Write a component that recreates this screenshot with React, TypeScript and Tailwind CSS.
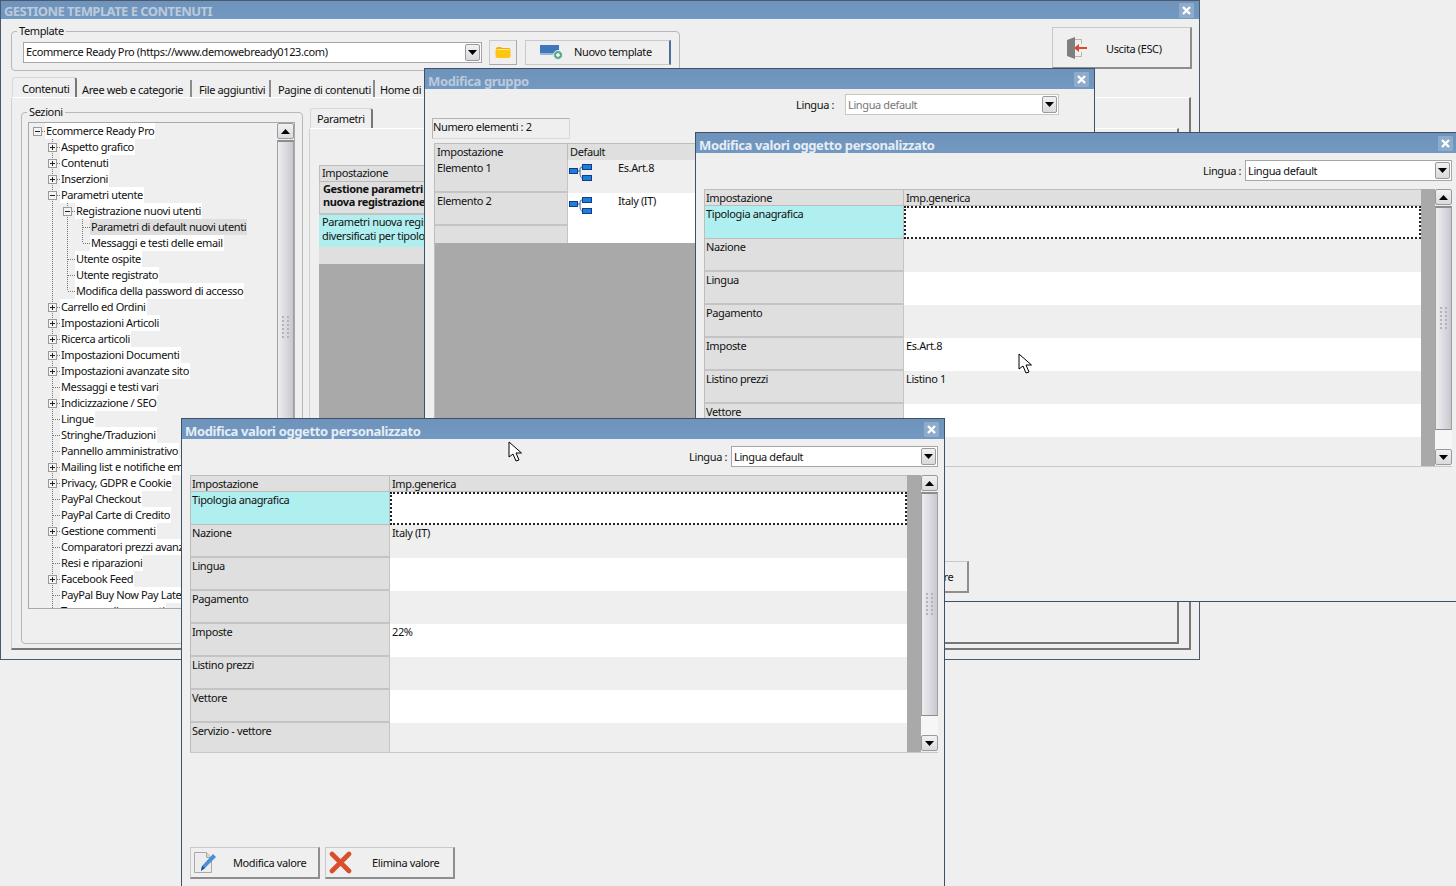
import React from 'react'

type TreeRow = { text: string; level: number; exp?: '+' | '-'; last?: boolean; selected?: boolean }

const treeRows: TreeRow[] = [
  { text: 'Ecommerce Ready Pro', level: 0, exp: '-' },
  { text: 'Aspetto grafico', level: 1, exp: '+' },
  { text: 'Contenuti', level: 1, exp: '+' },
  { text: 'Inserzioni', level: 1, exp: '+' },
  { text: 'Parametri utente', level: 1, exp: '-' },
  { text: 'Registrazione nuovi utenti', level: 2, exp: '-' },
  { text: 'Parametri di default nuovi utenti', level: 3, selected: true },
  { text: 'Messaggi e testi delle email', level: 3, last: true },
  { text: 'Utente ospite', level: 2 },
  { text: 'Utente registrato', level: 2 },
  { text: 'Modifica della password di accesso', level: 2, last: true },
  { text: 'Carrello ed Ordini', level: 1, exp: '+' },
  { text: 'Impostazioni Articoli', level: 1, exp: '+' },
  { text: 'Ricerca articoli', level: 1, exp: '+' },
  { text: 'Impostazioni Documenti', level: 1, exp: '+' },
  { text: 'Impostazioni avanzate sito', level: 1, exp: '+' },
  { text: 'Messaggi e testi vari', level: 1 },
  { text: 'Indicizzazione / SEO', level: 1, exp: '+' },
  { text: 'Lingue', level: 1 },
  { text: 'Stringhe/Traduzioni', level: 1 },
  { text: 'Pannello amministrativo', level: 1 },
  { text: 'Mailing list e notifiche email', level: 1, exp: '+' },
  { text: 'Privacy, GDPR e Cookie', level: 1, exp: '+' },
  { text: 'PayPal Checkout', level: 1 },
  { text: 'PayPal Carte di Credito', level: 1 },
  { text: 'Gestione commenti', level: 1, exp: '+' },
  { text: 'Comparatori prezzi avanzati', level: 1 },
  { text: 'Resi e riparazioni', level: 1 },
  { text: 'Facebook Feed', level: 1, exp: '+' },
  { text: 'PayPal Buy Now Pay Later', level: 1 },
  { text: 'Tracce e collegamenti', level: 1 },
]

const tabs = [
  { label: 'Aree web e categorie', box: 'w-[115px] pl-[5px]' },
  { label: 'File aggiuntivi', box: 'w-[79px] pl-[7px]' },
  { label: 'Pagine di contenuti', box: 'w-[104px] pl-[7px]' },
]

// righe condivise dalle due finestre "valori oggetto"
const rowLabels = ['Nazione', 'Lingua', 'Pagamento', 'Imposte', 'Listino prezzi', 'Vettore', 'Servizio - vettore']

function TreeCell({ vertical, half, exp, dash }: { vertical?: boolean; half?: boolean; exp?: '+' | '-'; dash?: boolean }) {
  return (
    <svg width="15" height="16" className="shrink-0" shapeRendering="crispEdges">
      {vertical && <line x1="7.5" y1="0" x2="7.5" y2={half ? 8 : 16} stroke="#777" strokeDasharray="1 1" />}
      {dash && <line x1="8" y1="8.5" x2="15" y2="8.5" stroke="#777" strokeDasharray="1 1" />}
      {exp && (
        <>
          <rect x="3.5" y="4.5" width="8" height="8" fill="#f4f4f4" stroke="#999" />
          <line x1="5" y1="8.5" x2="10" y2="8.5" stroke="#222" />
          {exp === '+' && <line x1="7.5" y1="6" x2="7.5" y2="11" stroke="#222" />}
        </>
      )}
    </svg>
  )
}

function Tree() {
  return (
    <div className="min-w-0 flex-1 overflow-hidden pl-px">
      {treeRows.map((r, i) => (
        <div key={i} className="flex h-4 items-center whitespace-nowrap">
          {r.level >= 1 && <TreeCell />}
          {r.level >= 2 && <TreeCell vertical />}
          {r.level >= 3 && <TreeCell vertical />}
          <TreeCell vertical={r.level > 0} half={r.last} exp={r.exp} dash />
          <span className={`px-px leading-4 ${r.selected ? 'bg-[#dedede]' : 'bg-white'}`}>{r.text}</span>
        </div>
      ))}
    </div>
  )
}

function Arrow({ up }: { up?: boolean }) {
  return (
    <svg width="9" height="5" viewBox="0 0 9 5">
      <path d={up ? 'M4.5 0 9 5H0z' : 'M0 0h9L4.5 5z'} fill="#000" />
    </svg>
  )
}

function ArrowButton({ up, className }: { up?: boolean; className?: string }) {
  return (
    <div className={`flex shrink-0 items-center justify-center rounded-[2px] border border-[#9a9a9a] bg-gradient-to-b from-[#f2f2f4] to-[#d9d9de] ${className ?? ''}`}>
      <Arrow up={up} />
    </div>
  )
}

function Grip() {
  return (
    <svg width="7" height="23" viewBox="0 0 7 23">
      {[0, 4, 8, 12, 16, 20].map(y => (
        <g key={y} fill="#b4b4b8">
          <rect x="0" y={y} width="2" height="2" />
          <rect x="5" y={y} width="2" height="2" />
        </g>
      ))}
    </svg>
  )
}

function Scrollbar({ thumb, track, clipped }: { thumb: number; track: number; clipped?: boolean }) {
  return (
    <div className="flex h-full w-[17px] shrink-0 flex-col overflow-hidden">
      <ArrowButton up className="h-[16px] w-[17px]" />
      <div
        className="mt-px flex shrink-0 items-center justify-center border-x border-b border-t-2 border-x-[#a0a0a0] border-b-[#8c8c8c] border-t-[#8c8c8c] bg-gradient-to-r from-[#eeeef1] to-[#c8c8d0]"
        style={{ height: thumb }}
      >
        <Grip />
      </div>
      {!clipped && (
        <>
          <div className="shrink-0 bg-[#f6f6f6]" style={{ height: track }} />
          <ArrowButton className="h-[16px] w-[17px]" />
        </>
      )}
    </div>
  )
}

function CloseBox() {
  return (
    <div className="flex h-[15px] w-[15px] items-center justify-center rounded-[1px] bg-[#8eabcb]">
      <svg width="9" height="9" viewBox="0 0 9 9">
        <path d="M1 1l7 7M8 1L1 8" stroke="#fff" strokeWidth="2.4" />
      </svg>
    </div>
  )
}

function TitleBar({ title, dim, main }: { title: string; dim?: boolean; main?: boolean }) {
  return (
    <div className={`flex shrink-0 items-center justify-between bg-gradient-to-b from-[#6f93bb] to-[#7299c2] pl-[3px] pr-[5px] ${main ? 'h-[18px]' : 'h-[20px]'}`}>
      <span
        className={`text-[13px] font-bold leading-[16px] ${dim ? 'text-[#bccadb]' : 'text-[#e6edf5]'} ${main ? 'pt-[2px] tracking-[-0.55px]' : 'pt-[4px] tracking-[-0.37px]'}`}
      >
        {title}
      </span>
      <CloseBox />
    </div>
  )
}

function Combo({ value, width, disabled }: { value: string; width: string; disabled?: boolean }) {
  return (
    <div className={`flex h-[21px] items-center justify-between border bg-white pl-[2px] pr-px ${width} ${disabled ? 'border-[#c9c9bd] text-[#777]' : 'border-[#a6a6a6]'}`}>
      <span className="whitespace-nowrap">{value}</span>
      <ArrowButton className="h-[17px] w-[15px]" />
    </div>
  )
}

function OrgIcon() {
  return (
    <svg width="23" height="22" viewBox="0 0 23 22" className="shrink-0">
      <path d="M9 11h2M11 11c0-3 0-4 2.500-4M11 11c0 3 0 7 2.500 7" fill="none" stroke="#3b5f96" strokeWidth="1" />
      <rect x="0.500" y="8.500" width="8" height="5" fill="#1d7fd8" stroke="#123c8a" />
      <rect x="13.500" y="4.500" width="9" height="5" fill="#1d7fd8" stroke="#123c8a" />
      <rect x="13.500" y="15.500" width="9" height="5" fill="#1d7fd8" stroke="#123c8a" />
    </svg>
  )
}

function EditIcon() {
  return (
    <svg width="24" height="24" viewBox="0 0 24 24">
      <path d="M.5 1.500h12l5 5v15H.5z" fill="#ededed" stroke="#a8a8a8" />
      <path d="M12.500 1.500v5h5" fill="#d6d6d6" stroke="#a8a8a8" />
      <path d="M7 20l1-5L19 3l3 3-11 11z" fill="#4a90d9" />
      <path d="M7 20l1-5 3 2z" fill="#26527e" />
    </svg>
  )
}

function DeleteIcon() {
  return (
    <svg width="24" height="24" viewBox="0 0 24 24">
      <path d="M3 3l17 17M20 3 3 20" stroke="#d94f2b" strokeWidth="4.600" strokeLinecap="round" />
    </svg>
  )
}

function ActionButton({ icon, label, iconBox }: { icon: React.ReactNode; label: string; iconBox: string }) {
  return (
    <div className="flex h-[32px] w-[130px] items-center border border-b-2 border-r-2 border-[#c9c9c9] border-b-[#8e8e8e] border-r-[#8e8e8e] pl-[3px]">
      <div className={`flex justify-start ${iconBox}`}>{icon}</div>
      <span className="whitespace-nowrap">{label}</span>
    </div>
  )
}

// griglia + barra di scorrimento delle finestre "Modifica valori oggetto personalizzato"
function ValuesWindow({ className, values, thumb }: { className: string; values: Record<string, string>; thumb: number }) {
  return (
    <div className={`absolute flex flex-col border border-[#3f5169] bg-[#efefef] ${className}`}>
      <TitleBar title="Modifica valori oggetto personalizzato" />
      <div className="flex flex-col pl-[8px] pr-[6px]">
        <div className="mt-[7px] flex items-center justify-end gap-[4px]">
          <span>Lingua :</span>
          <Combo value="Lingua default" width="w-[207px]" />
        </div>
        <div className="mt-[8px] flex h-[278px] overflow-hidden border-b border-[#c8c8c8]">
          <div className="w-[717px] shrink-0 border-l border-t border-[#bdbdbd]">
            <div className="flex h-[16px] border-b border-[#bdbdbd] bg-[#dfdfdf] leading-[15px]">
              <div className="w-[199px] shrink-0 border-r border-[#bdbdbd] pl-px">Impostazione</div>
              <div className="pl-[2px]">Imp.generica</div>
            </div>
            <div className="flex h-[33px]">
              <div className="w-[199px] shrink-0 border-b border-r border-[#bdbdbd] bg-[#b0efef] pl-px leading-[16px]">Tipologia anagrafica</div>
              <div className="flex-1 border-2 border-dotted border-[#222] bg-white" />
            </div>
            {rowLabels.map((label, i) => (
              <div key={label} className={`flex h-[33px] ${i % 2 === 0 ? 'bg-[#efefef]' : 'bg-white'}`}>
                <div className="w-[199px] shrink-0 border-b-2 border-r border-[#c4c4c4] bg-[#dfdfdf] pl-px leading-[16px]">{label}</div>
                <div className="pl-[2px] leading-[16px]">{values[label]}</div>
              </div>
            ))}
          </div>
          <div className="w-[14px] shrink-0 bg-[#a9a9a9]" />
          <Scrollbar thumb={thumb} track={19} />
        </div>
        <div className="mt-[94px] flex gap-[5px]">
          <ActionButton icon={<EditIcon />} label="Modifica valore" iconBox="w-[39px]" />
          <ActionButton icon={<DeleteIcon />} label="Elimina valore" iconBox="w-[43px]" />
        </div>
      </div>
    </div>
  )
}

function GroupWindow() {
  return (
    <div className="absolute left-[424px] top-[68px] flex h-[520px] w-[671px] flex-col border border-[#3f5169] bg-[#efefef]">
      <TitleBar title="Modifica gruppo" dim />
      <div className="mt-[5px] flex items-center justify-end gap-[11px] pr-[35px]">
        <span>Lingua :</span>
        <Combo value="Lingua default" width="w-[214px]" disabled />
      </div>
      <div className="ml-[7px] mt-[3px] h-[21px] w-[138px] border border-[#b4b4b4] border-b-[#d8d8d8] border-r-[#d8d8d8] leading-[15px]">Numero elementi : 2</div>
      <div className="ml-[9px] mt-[4px] flex flex-1 flex-col border-l border-t border-[#bdbdbd] bg-[#a9a9a9]">
        <div className="flex h-[16px] bg-[#dfdfdf] leading-[15px]">
          <div className="w-[133px] shrink-0 border-r border-[#bdbdbd] pl-[2px]">Impostazione</div>
          <div className="pl-[2px]">Default</div>
        </div>
        {[['Elemento 1', 'Es.Art.8', 'bg-[#efefef]'], ['Elemento 2', 'Italy (IT)', 'bg-white']].map(([name, value, bg]) => (
          <div key={name} className={`flex h-[33px] ${bg}`}>
            <div className="w-[133px] shrink-0 border-b-2 border-r border-[#c4c4c4] bg-[#dfdfdf] pl-[2px] leading-[16px]">{name}</div>
            <div className="flex h-[22px] items-start pl-px">
              <OrgIcon />
              <span className="ml-[26px] leading-[16px]">{value}</span>
            </div>
          </div>
        ))}
        <div className="flex h-[17px] bg-white">
          <div className="w-[133px] shrink-0 border-r border-[#c4c4c4] bg-[#dfdfdf]" />
        </div>
      </div>
    </div>
  )
}

function Cursor({ className }: { className: string }) {
  return (
    <svg width="15" height="21" viewBox="0 0 15 21" className={`absolute ${className}`}>
      <path d="M1 1v15l4-3 3 7 3-1-3-7h5.500z" fill="#fff" stroke="#000" strokeWidth="1" />
    </svg>
  )
}

function MainWindow() {
  return (
    <div className="absolute left-0 top-0 flex h-[660px] w-[1200px] flex-col border border-[#4a5a6c] bg-[#efefef]">
      <TitleBar title="GESTIONE TEMPLATE E CONTENUTI" dim main />
      <div className="flex items-start pl-[10px]">
        <div className="relative mt-[12px] flex h-[40px] w-[669px] items-center rounded-[4px] border border-[#b8b8b8] pl-[11px] pt-[2px]">
          <span className="absolute -top-[9px] left-[5px] bg-[#efefef] px-[2px] leading-[15px]">Template</span>
          <Combo value="Ecommerce Ready Pro (https://www.demowebready0123.com)" width="w-[459px]" />
          <div className="ml-[7px] flex h-[25px] w-[28px] items-center justify-center border border-[#c9c9c9] border-b-[#aaa] border-r-[#aaa]">
            <svg width="16" height="13" viewBox="0 0 16 13">
              <path d="M1 3q0-2 2-2h3l1 1h7q1 0 1 1v2H1z" fill="#f5ad00" />
              <path d="M.5 4q0-1 1-1h13q1 0 1 1v6q0 2-2 2h-11q-2 0-2-2z" fill="#ffc512" />
              <path d="M2 3.500h12" stroke="#ffe9a0" strokeWidth="1" />
            </svg>
          </div>
          <div className="ml-[8px] flex h-[25px] w-[146px] items-center border border-[#c9c9c9] border-r-2 border-r-[#4a6f9d] pl-[14px]">
            <svg width="24" height="16" viewBox="0 0 24 16" className="shrink-0">
              <rect x="0" y="1" width="19" height="8" fill="#3d78bd" />
              <rect x="0" y="9" width="19" height="2" fill="#9cb3ce" />
              <circle cx="18" cy="11" r="4.500" fill="#5aa88f" stroke="#dff0ea" />
              <path d="M18 9v4M16 11h4" stroke="#fff" strokeWidth="1.400" />
            </svg>
            <span className="ml-[10px] whitespace-nowrap">Nuovo template</span>
          </div>
        </div>
        <div className="ml-[372px] mt-[8px] flex h-[42px] w-[140px] items-center border border-[#c9c9c9] border-b-2 border-r-2 border-b-[#8e8e8e] border-r-[#8e8e8e] pl-[12px]">
          <svg width="24" height="24" viewBox="0 0 24 24" className="shrink-0">
            <path d="M2 4l8-3v22l-8-3z" fill="#7f7f7f" />
            <path d="M10 3h7v5h-1V4h-6zM10 20h6v-4h1v5h-7z" fill="#b5b5b5" />
            <path d="M22 11h-8V8l-5 4 5 4v-3h8z" fill="#d9492a" />
          </svg>
          <span className="ml-[17px] whitespace-nowrap pt-[3px]">Uscita (ESC)</span>
        </div>
      </div>
      <div className="ml-[11px] mt-[7px] flex h-[19px] items-end">
        <div className="flex h-[20px] w-[65px] items-center rounded-t-[3px] border-l border-t border-r-2 border-l-[#d8d8d8] border-t-[#d8d8d8] border-r-[#777] pl-[9px] pt-[3px]">Contenuti</div>
        {tabs.map(t => (
          <div key={t.label} className={`flex h-[17px] items-center whitespace-nowrap border-r-2 border-[#8c8c8c] pt-[2px] ${t.box}`}>{t.label}</div>
        ))}
        <div className="flex h-[17px] items-center whitespace-nowrap pl-[5px] pt-[2px]">Home di r</div>
      </div>
      <div className="ml-[10px] flex h-[553px] w-[1180px] items-start gap-[6px] border-b-2 border-l border-r-2 border-t border-b-[#777] border-l-[#d0d0d0] border-r-[#777] border-t-white pl-[9px] pt-[10px]">
        <div className="relative mt-[4px] flex h-[532px] w-[282px] flex-col rounded-[4px] border border-[#b8b8b8] pl-[6px] pt-[9px]">
          <span className="absolute -top-[9px] left-[5px] bg-[#efefef] px-[2px] leading-[15px]">Sezioni</span>
          <div className="flex h-[487px] w-[267px] overflow-hidden border border-[#a8a8a8]">
            <Tree />
            <Scrollbar thumb={374} track={0} clipped />
          </div>
        </div>
        <div className="flex h-[536px] w-[870px] flex-col">
          <div className="ml-px flex h-[20px] w-[63px] shrink-0 items-center rounded-t-[3px] border-l border-t border-r-2 border-l-[#d8d8d8] border-t-[#d8d8d8] border-r-[#777] pl-[6px]">Parametri</div>
          <div className="flex flex-1 flex-col border-b-2 border-l border-r-2 border-t border-b-[#777] border-l-[#d0d0d0] border-r-[#777] border-t-white pl-[9px] pt-[36px]">
            <div className="h-[426px] w-[850px] bg-[#a9a9a9]">
              <div className="flex h-[17px] border border-[#bdbdbd] bg-[#dfdfdf] pl-[2px] leading-[14px]">Impostazione</div>
              <div className="h-[33px] whitespace-nowrap border-b-2 border-l border-[#c4c4c4] bg-[#dfdfdf] pl-[3px] font-bold leading-[13px]">
                Gestione parametri di default
                <br />
                nuova registrazione
              </div>
              <div className="h-[32px] whitespace-nowrap bg-[#b0efef] pl-[3px] leading-[14px]">
                Parametri nuova registrazione utente
                <br />
                diversificati per tipologia
              </div>
              <div className="h-[17px] bg-[#dfdfdf]" />
            </div>
          </div>
        </div>
      </div>
    </div>
  )
}

export default function App() {
  return (
    <div className="relative h-[886px] w-[1456px] overflow-hidden bg-[#efefef] font-['Noto_Sans',sans-serif] text-[11px] leading-[16px] tracking-[-0.38px] text-[#111]">
      <MainWindow />
      <GroupWindow />
      <ValuesWindow
        className="left-[695px] top-[132px] h-[470px] w-[764px]"
        values={{ Imposte: 'Es.Art.8', 'Listino prezzi': 'Listino 1' }}
        thumb={224}
      />
      <ValuesWindow
        className="left-[181px] top-[418px] h-[480px] w-[764px]"
        values={{ Nazione: 'Italy (IT)', Imposte: '22%' }}
        thumb={224}
      />
      <Cursor className="left-[1018px] top-[353px]" />
      <Cursor className="left-[508px] top-[441px]" />
    </div>
  )
}
